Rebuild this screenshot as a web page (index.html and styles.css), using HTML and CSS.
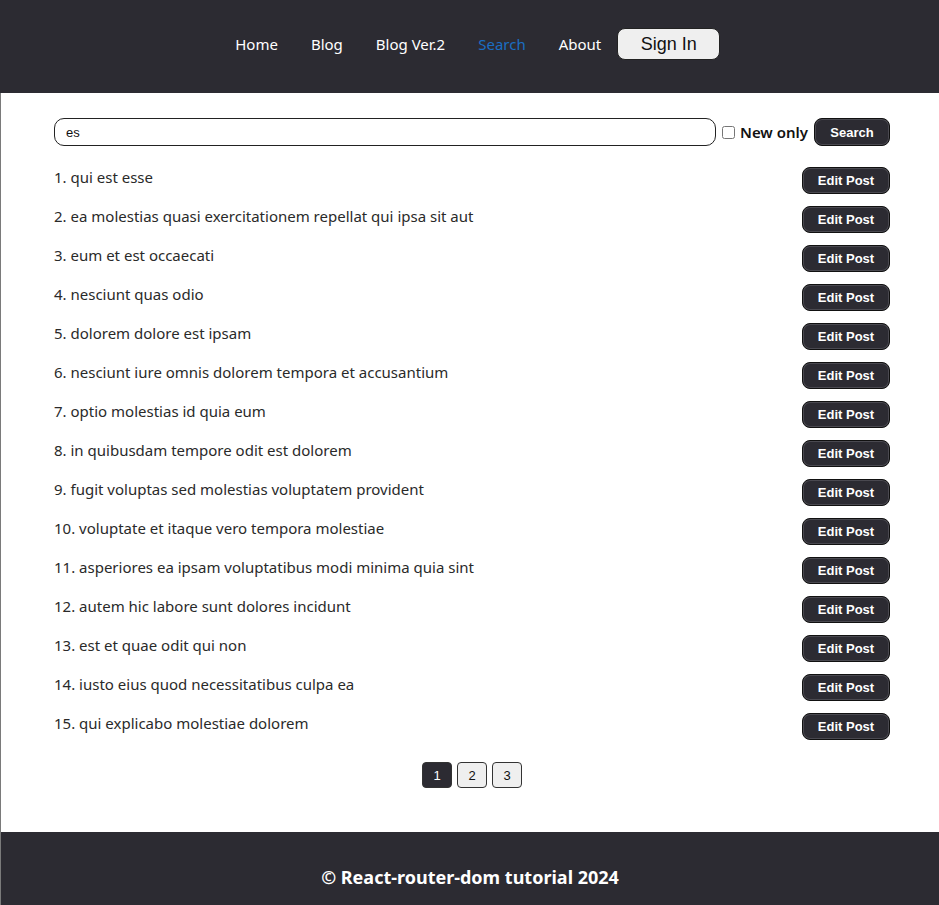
FILE: index.html
```html
<!DOCTYPE html>
<html lang="en">
<head>
<meta charset="utf-8">
<title>Search</title>
<link rel="stylesheet" href="styles.css">
</head>
<body>
<header class="header">
  <nav class="nav">
    <a class="nav-link" href="#">Home</a>
    <a class="nav-link" href="#">Blog</a>
    <a class="nav-link" href="#">Blog Ver.2</a>
    <a class="nav-link active" href="#">Search</a>
    <a class="nav-link" href="#">About</a>
    <button class="signin">Sign In</button>
  </nav>
</header>
<div class="page">
  <main class="main">
    <form class="search-row">
      <input class="search-input" type="text" value="es">
      <label class="new-only"><input type="checkbox" class="check">New only</label>
      <button type="button" class="dark-btn search-btn">Search</button>
    </form>
    <ul class="posts">
      <li class="post"><span>1. qui est esse</span><button class="dark-btn edit-btn">Edit Post</button></li>
      <li class="post"><span>2. ea molestias quasi exercitationem repellat qui ipsa sit aut</span><button class="dark-btn edit-btn">Edit Post</button></li>
      <li class="post"><span>3. eum et est occaecati</span><button class="dark-btn edit-btn">Edit Post</button></li>
      <li class="post"><span>4. nesciunt quas odio</span><button class="dark-btn edit-btn">Edit Post</button></li>
      <li class="post"><span>5. dolorem dolore est ipsam</span><button class="dark-btn edit-btn">Edit Post</button></li>
      <li class="post"><span>6. nesciunt iure omnis dolorem tempora et accusantium</span><button class="dark-btn edit-btn">Edit Post</button></li>
      <li class="post"><span>7. optio molestias id quia eum</span><button class="dark-btn edit-btn">Edit Post</button></li>
      <li class="post"><span>8. in quibusdam tempore odit est dolorem</span><button class="dark-btn edit-btn">Edit Post</button></li>
      <li class="post"><span>9. fugit voluptas sed molestias voluptatem provident</span><button class="dark-btn edit-btn">Edit Post</button></li>
      <li class="post"><span>10. voluptate et itaque vero tempora molestiae</span><button class="dark-btn edit-btn">Edit Post</button></li>
      <li class="post"><span>11. asperiores ea ipsam voluptatibus modi minima quia sint</span><button class="dark-btn edit-btn">Edit Post</button></li>
      <li class="post"><span>12. autem hic labore sunt dolores incidunt</span><button class="dark-btn edit-btn">Edit Post</button></li>
      <li class="post"><span>13. est et quae odit qui non</span><button class="dark-btn edit-btn">Edit Post</button></li>
      <li class="post"><span>14. iusto eius quod necessitatibus culpa ea</span><button class="dark-btn edit-btn">Edit Post</button></li>
      <li class="post"><span>15. qui explicabo molestiae dolorem</span><button class="dark-btn edit-btn">Edit Post</button></li>
    </ul>
    <div class="pager">
      <button class="page-btn current">1</button>
      <button class="page-btn">2</button>
      <button class="page-btn">3</button>
    </div>
  </main>
  <footer class="footer">© React-router-dom tutorial 2024</footer>
</div>
</body>
</html>
```
FILE: styles.css
```css
* { box-sizing: border-box; }
html, body { margin: 0; padding: 0; }
body {
  font-family: "Noto Sans", "Open Sans", sans-serif;
  color: #222;
  background: #fff;
}
.header {
  background: #2c2b32;
  height: 93px;
  display: flex;
  align-items: center;
  justify-content: center;
}
.nav {
  display: flex;
  align-items: center;
  margin-left: 0;
  margin-top: -5px;
}
.nav-link {
  color: #fff;
  text-decoration: none;
  font-size: 15px;
  padding: 0 16.5px;
  margin-top: -1px;
}
.nav-link:last-of-type { padding-right: 16px; }
.nav-link.active { color: #1b6ec2; }
.signin {
  font-family: "Liberation Sans", Arial, sans-serif;
  font-size: 18px;
  width: 103px;
  height: 32px;
  background: #efefef;
  color: #111;
  border: 1px solid #222;
  border-radius: 8px;
  padding: 0;
}
.page {
  border-left: 1px solid #7a7a7a;
}
.main {
  padding: 25px 49px 44px 53px;
}
.search-row {
  display: flex;
  align-items: center;
  margin: 0;
}
.search-input {
  flex: 1;
  height: 28px;
  border: 1px solid #222;
  border-radius: 10px;
  padding: 0 11px;
  font-family: "Liberation Sans", Arial, sans-serif;
  font-size: 13px;
  color: #111;
  outline: none;
}
.new-only {
  display: flex;
  align-items: center;
  font-size: 15px;
  font-weight: 600;
  color: #111;
  margin-left: 6px;
  margin-right: 6px;
}
.check {
  width: 13px;
  height: 13px;
  margin: 0 5px 0 0;
}
.dark-btn {
  background: #2c2b32;
  color: #fff;
  font-family: "Liberation Sans", Arial, sans-serif;
  font-weight: 700;
  font-size: 13px;
  border: 1px solid #111;
  border-radius: 8px;
  box-shadow: inset 0 0 0 1px #4a4950;
  padding: 0;
}
.search-btn {
  width: 76px;
  height: 28px;
}
.posts {
  list-style: none;
  margin: 21px 0 0;
  padding: 0;
  display: flex;
  flex-direction: column;
  gap: 12px;
}
.post {
  display: flex;
  align-items: center;
  justify-content: space-between;
  height: 27px;
  font-size: 15px;
  color: #2a2a2a;
}
.post span { margin-top: -7px; }
.edit-btn {
  width: 88px;
  height: 27px;
}
.pager {
  display: flex;
  justify-content: center;
  gap: 5px;
  margin-top: 22px;
}
.page-btn {
  width: 30px;
  height: 26px;
  border: 1px solid #333;
  border-radius: 4px;
  background: #efefef;
  color: #111;
  font-family: "Liberation Sans", Arial, sans-serif;
  font-size: 13px;
  padding: 0;
}
.page-btn.current {
  background: #2c2b32;
  color: #fff;
}
.footer {
  background: #2c2b32;
  color: #fff;
  font-weight: 700;
  font-size: 18px;
  text-align: center;
  padding: 33px 0 30px;
  line-height: 24px;
}
```
